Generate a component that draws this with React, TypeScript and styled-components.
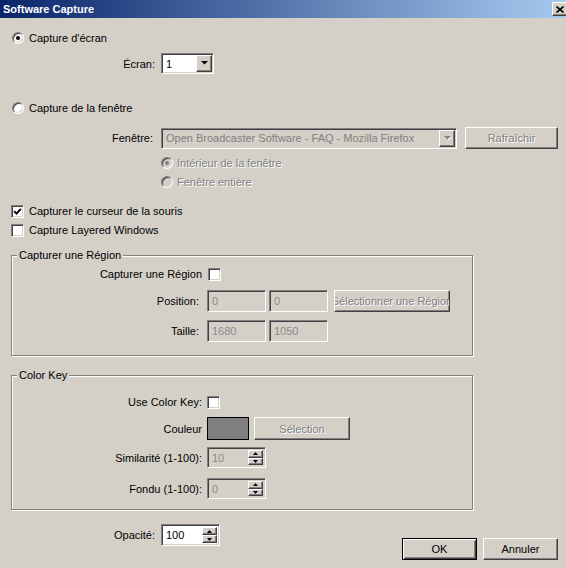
import React from 'react';
import styled, { createGlobalStyle, css } from 'styled-components';

const Global = createGlobalStyle`
  html, body { margin: 0; padding: 0; background: #d4d0c8; }
  body { font-family: "Liberation Sans", Arial, sans-serif; font-size: 11px; color: #000; }
  * { box-sizing: border-box; }
`;

const raised = css`
  background: #d4d0c8;
  border: 1px solid;
  border-color: #fff #404040 #404040 #fff;
  box-shadow: inset -1px -1px 0 #808080, inset 1px 1px 0 #d4d0c8;
`;

const sunken = css`
  border: 1px solid;
  border-color: #808080 #fff #fff #808080;
  box-shadow: inset 1px 1px 0 #404040, inset -1px -1px 0 #d4d0c8;
`;

const disabledText = css`
  color: #808080;
  text-shadow: 1px 1px 0 #fff;
`;

const Window = styled.div`
  width: 566px;
  height: 568px;
  overflow: hidden;
  background: #d4d0c8;
  display: flex;
  flex-direction: column;
`;

const TitleBar = styled.div`
  height: 18px;
  flex: none;
  display: flex;
  align-items: center;
  justify-content: space-between;
  padding-left: 3px;
  background: linear-gradient(to right, #0a246a, #a6caf0);
  color: #fff;
  font-weight: bold;
  font-size: 11px;
`;

const CloseBtn = styled.div`
  ${raised};
  width: 16px;
  height: 14px;
  margin-right: -2px;
  display: flex;
  align-items: center;
  justify-content: center;
`;

const Body = styled.div`
  flex: 1;
  display: flex;
  flex-direction: column;
`;

const Row = styled.div<{ $mt: number; $h: number; $pl?: number; $gap?: number }>`
  display: flex;
  align-items: center;
  flex: none;
  height: ${(p) => p.$h}px;
  margin-top: ${(p) => p.$mt}px;
  padding-left: ${(p) => p.$pl ?? 0}px;
  gap: ${(p) => p.$gap ?? 0}px;
  white-space: nowrap;
`;

const FieldLabel = styled.span<{ $w: number; $gap: number }>`
  flex: none;
  width: ${(p) => p.$w}px;
  margin-right: ${(p) => p.$gap}px;
  text-align: right;
  white-space: nowrap;
`;

const OptionText = styled.span<{ $disabled?: boolean }>`
  white-space: nowrap;
  ${(p) => p.$disabled && disabledText};
`;

const RadioCircle = styled.span<{ $checked?: boolean; $disabled?: boolean }>`
  flex: none;
  position: relative;
  width: 12px;
  height: 12px;
  border-radius: 50%;
  background: ${(p) => (p.$disabled ? '#d4d0c8' : '#fff')};
  border: 1px solid;
  border-color: #808080 #fff #fff #808080;
  box-shadow: inset 1px 1px 0 #404040, inset -1px -1px 0 #d4d0c8;
  &::after {
    content: '';
    display: ${(p) => (p.$checked ? 'block' : 'none')};
    position: absolute;
    left: 3px;
    top: 3px;
    width: 4px;
    height: 4px;
    border-radius: 50%;
    background: ${(p) => (p.$disabled ? '#808080' : '#000')};
  }
`;

const CheckBox = styled.span`
  ${sunken};
  flex: none;
  width: 13px;
  height: 13px;
  background: #fff;
  display: flex;
  align-items: center;
  justify-content: center;
`;

const Select = styled.div<{ $w: number; $disabled?: boolean }>`
  ${sunken};
  flex: none;
  width: ${(p) => p.$w}px;
  height: 21px;
  padding: 1px 1px 1px 4px;
  background: ${(p) => (p.$disabled ? '#d4d0c8' : '#fff')};
  color: ${(p) => (p.$disabled ? '#808080' : '#000')};
  display: flex;
  align-items: center;
  justify-content: space-between;
  overflow: hidden;
  white-space: nowrap;
`;

const SelectText = styled.span`
  overflow: hidden;
  flex: 1;
`;

const DropBtn = styled.span`
  ${raised};
  flex: none;
  width: 16px;
  height: 17px;
  display: flex;
  align-items: center;
  justify-content: center;
`;

const Field = styled.div<{ $w: number; $h: number; $enabled?: boolean }>`
  ${sunken};
  flex: none;
  width: ${(p) => p.$w}px;
  height: ${(p) => p.$h}px;
  padding: 2px 2px 2px 4px;
  background: ${(p) => (p.$enabled ? '#fff' : '#d4d0c8')};
  color: ${(p) => (p.$enabled ? '#000' : '#8a8a8a')};
  display: flex;
  align-items: center;
  justify-content: space-between;
`;

const Spinner = styled.span`
  flex: none;
  width: 15px;
  height: 100%;
  display: flex;
  flex-direction: column;
`;

const SpinBtn = styled.span`
  ${raised};
  flex: 1;
  display: flex;
  align-items: center;
  justify-content: center;
`;

const Button = styled.div<{ $w: number; $h: number; $disabled?: boolean; $default?: boolean }>`
  ${raised};
  flex: none;
  width: ${(p) => p.$w}px;
  height: ${(p) => p.$h}px;
  display: flex;
  align-items: center;
  justify-content: center;
  overflow: hidden;
  white-space: nowrap;
  ${(p) => p.$disabled && disabledText};
  ${(p) =>
    p.$default &&
    css`
      border: 1px solid #000;
      box-shadow: inset 1px 1px 0 #fff, inset -1px -1px 0 #404040, inset 2px 2px 0 #d4d0c8,
        inset -2px -2px 0 #808080;
    `};
`;

const Swatch = styled.span`
  flex: none;
  width: 42px;
  height: 23px;
  border: 1px solid #000;
  background: #808080;
  margin-right: 5px;
`;

const Group = styled.div<{ $mt: number; $pt: number; $pb: number }>`
  position: relative;
  flex: none;
  width: 462px;
  margin: ${(p) => p.$mt}px 0 0 11px;
  padding: ${(p) => p.$pt}px 0 ${(p) => p.$pb}px 0;
  border: 1px solid #808080;
  box-shadow: inset 1px 1px 0 #fff, 1px 1px 0 #fff;
  display: flex;
  flex-direction: column;
`;

const Legend = styled.span`
  position: absolute;
  top: -8px;
  left: 5px;
  padding: 0 2px;
  line-height: 14px;
  background: #d4d0c8;
  white-space: nowrap;
`;

const BottomBar = styled.div`
  flex: none;
  margin-top: 14px;
  display: flex;
  justify-content: space-between;
  align-items: flex-start;
  padding-right: 8px;
`;

const ButtonBar = styled.div`
  display: flex;
  gap: 6px;
  margin-top: 14px;
`;

const Arrow = ({ disabled, up }: { disabled?: boolean; up?: boolean }) => (
  <svg width="7" height="5" viewBox="0 0 7 5" style={{ overflow: 'visible' }}>
    {disabled && (
      <polygon
        points={up ? '1,4 4,1 7,4' : '1,1 8,1 4.5,4.5'}
        fill="#fff"
        transform="translate(0,0)"
      />
    )}
    <polygon
      points={up ? '0,3.5 3.5,0 7,3.5' : '0,0 7,0 3.5,3.5'}
      fill={disabled ? '#808080' : '#000'}
    />
  </svg>
);

const SmallArrow = ({ up }: { up?: boolean }) => (
  <svg width="5" height="3" viewBox="0 0 5 3">
    <polygon points={up ? '0,3 2.5,0 5,3' : '0,0 5,0 2.5,3'} fill="#000" />
  </svg>
);

const Check = () => (
  <svg width="9" height="9" viewBox="0 0 9 9">
    <polyline points="1.2,4.2 3.5,6.6 7.8,1.8" fill="none" stroke="#000" strokeWidth="1.9" />
  </svg>
);

const CloseX = () => (
  <svg width="8" height="7" viewBox="0 0 8 7">
    <line x1="0.5" y1="0.5" x2="7.5" y2="6.5" stroke="#000" strokeWidth="1.7" />
    <line x1="7.5" y1="0.5" x2="0.5" y2="6.5" stroke="#000" strokeWidth="1.7" />
  </svg>
);

const SpinField = ({ w, h, value, enabled }: { w: number; h: number; value: string; enabled?: boolean }) => (
  <Field $w={w} $h={h} $enabled={enabled}>
    <span>{value}</span>
    <Spinner>
      <SpinBtn>
        <SmallArrow up />
      </SpinBtn>
      <SpinBtn>
        <SmallArrow />
      </SpinBtn>
    </Spinner>
  </Field>
);

export default function App() {
  return (
    <>
      <Global />
      <Window>
        <TitleBar>
          <span>Software Capture</span>
          <CloseBtn>
            <CloseX />
          </CloseBtn>
        </TitleBar>
        <Body>
          <Row $mt={12} $h={16} $pl={12} $gap={5}>
            <RadioCircle $checked />
            <OptionText>Capture d'écran</OptionText>
          </Row>
          <Row $mt={7} $h={21}>
            <FieldLabel $w={155} $gap={6}>Écran:</FieldLabel>
            <Select $w={53}>
              <SelectText>1</SelectText>
              <DropBtn>
                <Arrow />
              </DropBtn>
            </Select>
          </Row>
          <Row $mt={26} $h={16} $pl={12} $gap={5}>
            <RadioCircle />
            <OptionText>Capture de la fenêtre</OptionText>
          </Row>
          <Row $mt={11} $h={22}>
            <FieldLabel $w={153} $gap={8}>Fenêtre:</FieldLabel>
            <Select $w={296} $disabled>
              <SelectText>Open Broadcaster Software - FAQ - Mozilla Firefox</SelectText>
              <DropBtn>
                <Arrow disabled />
              </DropBtn>
            </Select>
            <Button $w={93} $h={22} $disabled style={{ marginLeft: 8 }}>
              Rafraîchir
            </Button>
          </Row>
          <Row $mt={6} $h={16} $pl={161} $gap={4}>
            <RadioCircle $checked $disabled />
            <OptionText $disabled>Intérieur de la fenêtre</OptionText>
          </Row>
          <Row $mt={3} $h={16} $pl={161} $gap={4}>
            <RadioCircle $disabled />
            <OptionText $disabled>Fenêtre entière</OptionText>
          </Row>
          <Row $mt={13} $h={16} $pl={11} $gap={5}>
            <CheckBox>
              <Check />
            </CheckBox>
            <OptionText>Capturer le curseur de la souris</OptionText>
          </Row>
          <Row $mt={3} $h={16} $pl={11} $gap={5}>
            <CheckBox />
            <OptionText>Capture Layered Windows</OptionText>
          </Row>

          <Group $mt={17} $pt={10} $pb={13}>
            <Legend>Capturer une Région</Legend>
            <Row $mt={0} $h={16}>
              <FieldLabel $w={190} $gap={6}>Capturer une Région</FieldLabel>
              <CheckBox />
            </Row>
            <Row $mt={8} $h={22}>
              <FieldLabel $w={187} $gap={8}>Position:</FieldLabel>
              <Field $w={59} $h={22}>0</Field>
              <Field $w={59} $h={22} style={{ marginLeft: 3 }}>0</Field>
              <Button $w={116} $h={22} $disabled style={{ marginLeft: 6 }}>
                Sélectionner une Région
              </Button>
            </Row>
            <Row $mt={8} $h={22}>
              <FieldLabel $w={187} $gap={8}>Taille:</FieldLabel>
              <Field $w={59} $h={22}>1680</Field>
              <Field $w={59} $h={22} style={{ marginLeft: 3 }}>1050</Field>
            </Row>
          </Group>

          <Group $mt={19} $pt={18} $pb={10}>
            <Legend>Color Key</Legend>
            <Row $mt={0} $h={16}>
              <FieldLabel $w={190} $gap={5}>Use Color Key:</FieldLabel>
              <CheckBox />
            </Row>
            <Row $mt={7} $h={23}>
              <FieldLabel $w={190} $gap={5}>Couleur</FieldLabel>
              <Swatch />
              <Button $w={96} $h={23} $disabled>
                Sélection
              </Button>
            </Row>
            <Row $mt={7} $h={21}>
              <FieldLabel $w={190} $gap={5}>Similarité (1-100):</FieldLabel>
              <SpinField w={59} h={21} value="10" />
            </Row>
            <Row $mt={10} $h={21}>
              <FieldLabel $w={190} $gap={5}>Fondu (1-100):</FieldLabel>
              <SpinField w={59} h={21} value="0" />
            </Row>
          </Group>

          <BottomBar>
            <Row $mt={0} $h={22}>
              <FieldLabel $w={155} $gap={6}>Opacité:</FieldLabel>
              <SpinField w={59} h={22} value="100" enabled />
            </Row>
            <ButtonBar>
              <Button $w={75} $h={22} $default>
                OK
              </Button>
              <Button $w={75} $h={22}>
                Annuler
              </Button>
            </ButtonBar>
          </BottomBar>
        </Body>
      </Window>
    </>
  );
}
